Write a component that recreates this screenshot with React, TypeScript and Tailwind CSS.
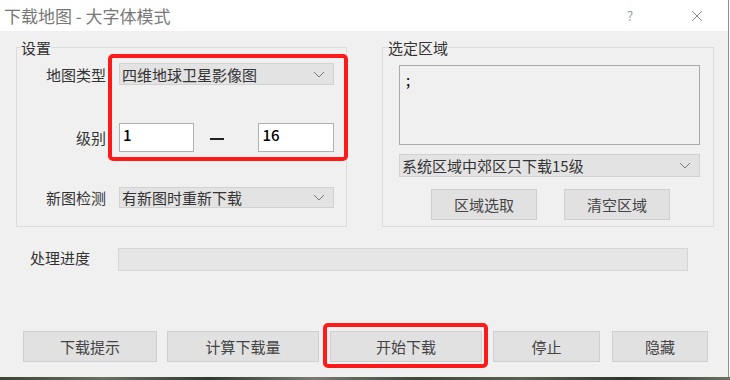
import React from 'react';

const font = { fontFamily: '"Noto Sans CJK SC", "Microsoft YaHei", sans-serif' };

const Chevron: React.FC = () => (
  <svg width="12" height="7" viewBox="0 0 12 7" className="shrink-0">
    <path d="M1 1 L6 6 L11 1" fill="none" stroke="#7a7a7a" strokeWidth="1" />
  </svg>
);

const Combo: React.FC<{ text: string; className?: string }> = ({ text, className = '' }) => (
  <div
    className={`flex items-center justify-between bg-[#e3e3e3] border border-[#d2d2d2] pl-[2px] pr-[8px] text-[15px] leading-none text-[#333] ${className}`}
  >
    <span>{text}</span>
    <Chevron />
  </div>
);

const Btn: React.FC<{ text: string; className?: string }> = ({ text, className = '' }) => (
  <button
    className={`h-[31px] bg-[#e1e1e1] border border-[#cfcfcf] text-[15px] leading-none text-[#444] ${className}`}
  >
    {text}
  </button>
);

const App: React.FC = () => {
  return (
    <div className="w-[730px] h-[380px] flex flex-col bg-white overflow-hidden" style={font}>
      <div className="flex-1 flex flex-col border-r border-[#8f8f8f] mr-[1px]">
        {/* title bar */}
        <div className="h-[31px] shrink-0 bg-white flex items-center">
          <span className="pl-[4px] text-[17px] text-[#777] leading-none">下载地图 - 大字体模式</span>
          <span className="ml-auto w-[12px] text-[13px] text-[#9a9a9a] leading-none">?</span>
          <svg width="12" height="12" viewBox="0 0 12 12" className="ml-[52px] mr-[25px]">
            <path d="M1 1 L11 11 M11 1 L1 11" stroke="#8a8a8a" strokeWidth="1" />
          </svg>
        </div>

        {/* body */}
        <div className="flex-1 bg-[#f0f0f0] flex flex-col">
          <div className="flex pt-[16px]">
            {/* settings group */}
            <div className="relative ml-[16px] w-[331px] h-[180px] border border-[#dcdcdc]">
              <span className="absolute left-[4px] top-[-8px] bg-[#f0f0f0] text-[15px] leading-none text-[#333]">设置</span>
              <div className="grid grid-cols-[89px_215px] gap-x-[13px] pt-[15px] text-[15px] text-[#333]">
                <div className="h-[22px] flex items-center justify-end leading-none">地图类型</div>
                <Combo text="四维地球卫星影像图" className="h-[22px]" />

                <div className="h-[29px] mt-[38px] flex items-center justify-end leading-none">级别</div>
                <div className="h-[29px] mt-[38px] flex items-center">
                  <div className="w-[75px] h-[29px] bg-white border border-[#b0b0b0] pl-[3px] pt-[2px] text-[15px] leading-tight text-black font-medium">1</div>
                  <div className="w-[15px] h-[2px] bg-[#222] mt-[2px] ml-[16px]" />
                  <div className="w-[76px] h-[29px] ml-[34px] bg-white border border-[#b0b0b0] pl-[3px] pt-[2px] text-[15px] leading-tight text-black font-medium">16</div>
                </div>

                <div className="h-[21px] mt-[35px] flex items-center justify-end leading-none">新图检测</div>
                <Combo text="有新图时重新下载" className="h-[21px] mt-[35px]" />
              </div>
              <div className="absolute left-[91px] top-[6px] w-[240px] h-[107px] border-[4px] border-[#ff1a1a] rounded-[5px]" />
            </div>

            {/* region group */}
            <div className="relative ml-[35px] w-[332px] h-[180px] border border-[#dcdcdc]">
              <span className="absolute left-[5px] top-[-8px] bg-[#f0f0f0] text-[15px] leading-none text-[#333]">选定区域</span>
              <div className="pl-[16px] pt-[17px] flex flex-col">
                <div className="w-[301px] h-[80px] border border-[#a9a9a9] bg-[#f0f0f0] pl-[6px] pt-[6px] text-[15px] leading-none text-black">;</div>
                <Combo text="系统区域中郊区只下载15级" className="w-[301px] h-[23px] mt-[9px]" />
                <div className="flex gap-[27px] pl-[32px] mt-[12px]">
                  <Btn text="区域选取" className="w-[106px]" />
                  <Btn text="清空区域" className="w-[106px]" />
                </div>
              </div>
            </div>
          </div>

          {/* progress */}
          <div className="flex items-center mt-[21px]">
            <span className="pl-[30px] w-[118px] text-[15px] leading-none text-[#333] mb-[4px]">处理进度</span>
            <div className="w-[570px] h-[23px] bg-[#e6e6e6] border border-[#d6d6d6]" />
          </div>

          {/* bottom buttons */}
          <div className="relative flex pl-[23px] mt-[60px]">
            <Btn text="下载提示" className="w-[134px]" />
            <Btn text="计算下载量" className="w-[152px] ml-[10px]" />
            <Btn text="开始下载" className="w-[152px] ml-[11px]" />
            <Btn text="停止" className="w-[107px] ml-[11px]" />
            <Btn text="隐藏" className="w-[96px] ml-[12px]" />
            <div className="absolute left-[323px] top-[-8px] w-[165px] h-[45px] border-[4px] border-[#ff1a1a] rounded-[5px]" />
          </div>
        </div>
      </div>
      <div className="h-[3px] shrink-0 bg-[linear-gradient(90deg,#3d4535,#6b6f62,#2f3a2c,#7a7c70,#40483a,#5c6152,#2d3529,#6d7063)]" />
    </div>
  );
};

export default App;
